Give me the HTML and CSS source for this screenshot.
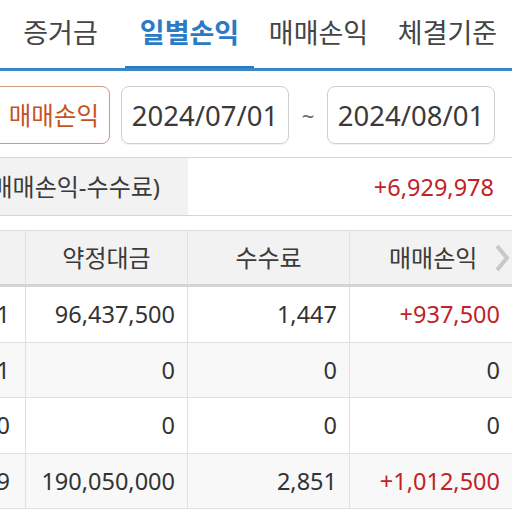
FILE: index.html
```html
<!DOCTYPE html>
<html lang="ko">
<head>
<meta charset="utf-8">
<link rel="stylesheet" href="styles.css">
</head>
<body>
<div class="tabs">
  <div class="tab">증거금</div>
  <div class="tab active">일별손익</div>
  <div class="tab">매매손익</div>
  <div class="tab">체결기준</div>
</div>
<div class="filter">
  <div class="btn">매매손익</div>
  <div class="date">2024/07/01</div>
  <div class="tilde">~</div>
  <div class="date">2024/08/01</div>
</div>
<div class="summary">
  <div class="sum-label"><span>총손익(매매손익-수수료)</span></div>
  <div class="sum-value">+6,929,978</div>
</div>
<div class="table">
  <div class="row head">
    <div class="cell c0"></div>
    <div class="cell center">약정대금</div>
    <div class="cell center">수수료</div>
    <div class="cell last-head">매매손익
      <svg class="chev" width="16" height="30" viewBox="0 0 16 30"><polyline points="3,3 13,15 3,27" fill="none" stroke="#c8c8c8" stroke-width="4"/></svg>
    </div>
  </div>
  <div class="row">
    <div class="cell c0"><span>20240731</span></div>
    <div class="cell">96,437,500</div>
    <div class="cell">1,447</div>
    <div class="cell red">+937,500</div>
  </div>
  <div class="row alt">
    <div class="cell c0"><span>20240701</span></div>
    <div class="cell">0</div>
    <div class="cell">0</div>
    <div class="cell">0</div>
  </div>
  <div class="row">
    <div class="cell c0"><span>20240630</span></div>
    <div class="cell">0</div>
    <div class="cell">0</div>
    <div class="cell">0</div>
  </div>
  <div class="row alt">
    <div class="cell c0"><span>20240629</span></div>
    <div class="cell">190,050,000</div>
    <div class="cell">2,851</div>
    <div class="cell red">+1,012,500</div>
  </div>
</div>
</body>
</html>
```
FILE: styles.css
```css
html, body {
  margin: 0;
  padding: 0;
  background: #fff;
  overflow: hidden;
}
body {
  width: 512px;
  height: 512px;
  font-family: "Noto Sans", "Noto Sans CJK KR", sans-serif;
  color: #383838;
}
.tabs {
  display: flex;
  height: 71px;
  box-sizing: border-box;
  border-bottom: 3px solid #3a87c8;
  margin-left: -4px;
}
.tab {
  flex: 0 0 129px;
  height: 68px;
  box-sizing: border-box;
  padding-bottom: 6px;
  display: flex;
  align-items: center;
  justify-content: center;
  font-size: 27px;
  color: #444;
}
.tab.active {
  color: #2a7bc6;
  font-weight: bold;
  box-shadow: inset 0 -2px 0 #2a7bc6;
}
.filter {
  display: flex;
  align-items: center;
  padding: 15px 0 13px;
  border-bottom: 1px solid #d6d6d6;
}
.btn {
  flex: 0 0 auto;
  width: 126px;
  height: 58px;
  box-sizing: border-box;
  margin-left: -16px;
  margin-right: 11px;
  border: 1px solid #cf9a80;
  border-radius: 8px;
  display: flex;
  align-items: center;
  justify-content: flex-end;
  padding-right: 10px;
  padding-bottom: 2px;
  font-size: 24.5px;
  color: #c5531f;
}
.date {
  width: 168px;
  height: 58px;
  box-sizing: border-box;
  border: 1px solid #cfcfcf;
  border-radius: 8px;
  display: flex;
  align-items: center;
  justify-content: center;
  font-size: 27.5px;
  color: #3a3a3a;
  box-shadow: 0 1px 1px rgba(0,0,0,0.06);
}
.tilde {
  width: 38px;
  text-align: center;
  font-size: 22px;
  color: #666;
}
.summary {
  display: flex;
  height: 58px;
  box-sizing: border-box;
  border-bottom: 1px solid #d6d6d6;
  margin-bottom: 14px;
}
.sum-label {
  width: 188px;
  background: #f2f2f2;
  display: flex;
  justify-content: flex-end;
  align-items: center;
  overflow: hidden;
  padding-right: 28px;
  padding-bottom: 2px;
  box-sizing: border-box;
  font-size: 24px;
  color: #3a3a3a;
  white-space: nowrap;
}
.sum-label span { flex: 0 0 auto; }
.sum-value {
  flex: 1;
  display: flex;
  align-items: center;
  justify-content: flex-end;
  padding-right: 18px;
  font-size: 23.5px;
  color: #bf2228;
}
.table {
  border-top: 1px solid #dcdcdc;
}
.row {
  display: grid;
  grid-template-columns: 26px 162px 162px 162px;
  height: 55.5px;
  border-bottom: 1px solid #e0e0e0;
  box-sizing: border-box;
  background: #fff;
}
.row.alt { background: #f8f8f8; }
.row.head {
  background: #f2f2f2;
  height: 56px;
  border-bottom: 3px solid #d4d4d4;
}
.cell {
  display: flex;
  align-items: center;
  justify-content: flex-end;
  padding-right: 12px;
  border-right: 1px solid #e0e0e0;
  font-size: 23.5px;
  color: #333;
  white-space: nowrap;
  overflow: hidden;
  box-sizing: border-box;
}
.cell:last-child { border-right: none; }
.cell.c0 { padding-right: 15px; }
.cell.c0 span { flex: 0 0 auto; }
.head .cell {
  font-size: 24px;
  color: #3a3a3a;
  padding-bottom: 3px;
}
.cell.center {
  justify-content: center;
  padding-right: 0;
}
.cell.last-head {
  padding-right: 0;
  justify-content: flex-start;
  padding-left: 39px;
  position: relative;
}
.chev {
  position: absolute;
  right: 2px;
  top: 12px;
}
.red { color: #bf2228; }
```
